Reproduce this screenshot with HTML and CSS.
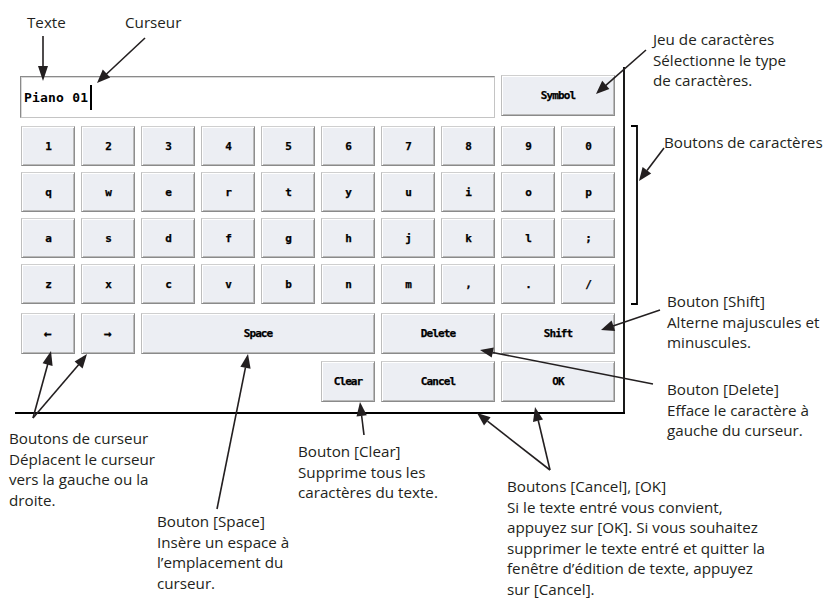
FILE: index.html
```html
<!DOCTYPE html>
<html lang="fr">
<head>
<meta charset="utf-8">
<title>Clavier</title>
<link rel="stylesheet" href="styles.css">
</head>
<body>
<div class="page">
  <div class="kbd">
    <div class="field"><span class="value">Piano 01</span><span class="caret"></span></div>
    <div class="key tall wide2">Symbol</div>

    <div class="key">1</div><div class="key">2</div><div class="key">3</div><div class="key">4</div><div class="key">5</div>
    <div class="key">6</div><div class="key">7</div><div class="key">8</div><div class="key">9</div><div class="key">0</div>

    <div class="key">q</div><div class="key">w</div><div class="key">e</div><div class="key">r</div><div class="key">t</div>
    <div class="key">y</div><div class="key">u</div><div class="key">i</div><div class="key">o</div><div class="key">p</div>

    <div class="key">a</div><div class="key">s</div><div class="key">d</div><div class="key">f</div><div class="key">g</div>
    <div class="key">h</div><div class="key">j</div><div class="key">k</div><div class="key">l</div><div class="key">;</div>

    <div class="key">z</div><div class="key">x</div><div class="key">c</div><div class="key">v</div><div class="key">b</div>
    <div class="key">n</div><div class="key">m</div><div class="key">,</div><div class="key">.</div><div class="key">/</div>

    <div class="key tall arrow">←</div>
    <div class="key tall arrow">→</div>
    <div class="key tall wide4">Space</div>
    <div class="key tall wide2">Delete</div>
    <div class="key tall wide2">Shift</div>

    <div class="key tall col6">Clear</div>
    <div class="key tall wide2">Cancel</div>
    <div class="key tall wide2">OK</div>
  </div>

  <svg class="overlay" width="824" height="602" viewBox="0 0 824 602">
    <g class="frame">
      <line x1="624" y1="67" x2="624" y2="413"/>
      <line x1="15" y1="413" x2="625" y2="413"/>
      <polyline points="631,126 637,126 637,304 631,304"/>
    </g>
    <g class="arrows">
      <line x1="43" y1="36" x2="43" y2="68"/>
      <polygon points="43,81 38,66 48,66"/>

      <line x1="145" y1="38" x2="106" y2="74.5"/>
      <polygon points="97,83 102.8,69.6 110.2,77.4"/>

      <line x1="646" y1="50" x2="605.5" y2="85.6"/>
      <polygon points="596,94 602.2,80.8 609.4,89"/>

      <line x1="664" y1="148" x2="647" y2="170.4"/>
      <polygon points="639,181 642.6,167 651.2,173.6"/>

      <line x1="660" y1="310" x2="613" y2="326"/>
      <polygon points="601,330 611.6,320.6 615.1,331"/>

      <line x1="653" y1="384" x2="492.5" y2="352.5"/>
      <polygon points="480,350 493.8,347.4 491.7,357.6"/>

      <line x1="33" y1="418" x2="47.8" y2="364"/>
      <polygon points="51,351 52.6,365.9 42.6,363.2"/>
      <line x1="33" y1="418" x2="78.8" y2="364.6"/>
      <polygon points="87,354 82.6,368.4 74.6,361.6"/>

      <line x1="217" y1="509" x2="245.5" y2="367.3"/>
      <polygon points="248,354 250.6,368.8 240.4,366.8"/>

      <line x1="364" y1="435" x2="361.6" y2="415.5"/>
      <polygon points="360,402 366.8,415.3 356.5,416.6"/>

      <line x1="550" y1="470" x2="487.5" y2="421.2"/>
      <polygon points="477,413 490.6,417.3 484,425.6"/>
      <line x1="550" y1="470" x2="538.2" y2="420.3"/>
      <polygon points="535,407 543,419.6 533,422"/>
    </g>
  </svg>

  <div class="note n-texte">Texte</div>
  <div class="note n-curseur">Curseur</div>
  <div class="note n-jeu">Jeu de caractères<br>Sélectionne le type<br>de caractères.</div>
  <div class="note n-boutons">Boutons de caractères</div>
  <div class="note n-shift">Bouton [Shift]<br>Alterne majuscules et<br>minuscules.</div>
  <div class="note n-delete">Bouton [Delete]<br>Efface le caractère à<br>gauche du curseur.</div>
  <div class="note n-cursor">Boutons de curseur<br>Déplacent le curseur<br>vers la gauche ou la<br>droite.</div>
  <div class="note n-clear">Bouton [Clear]<br>Supprime tous les<br>caractères du texte.</div>
  <div class="note n-space">Bouton [Space]<br>Insère un espace à<br>l’emplacement du<br>curseur.</div>
  <div class="note n-ok">Boutons [Cancel], [OK]<br>Si le texte entré vous convient,<br>appuyez sur [OK]. Si vous souhaitez<br>supprimer le texte entré et quitter la<br>fenêtre d’édition de texte, appuyez<br>sur [Cancel].</div>
</div>
</body>
</html>
```

FILE: styles.css
```css
* { box-sizing: border-box; }

html, body {
  margin: 0;
  padding: 0;
  background: #ffffff;
}

body {
  width: 824px;
  height: 602px;
  overflow: hidden;
  font-family: "Open Sans", "Noto Sans", sans-serif;
  color: #231f20;
}

.page {
  position: relative;
  width: 824px;
  height: 602px;
  padding: 75px 0 0 21px;
}

.kbd {
  display: grid;
  grid-template-columns: repeat(10, 54px);
  grid-template-rows: 45px 40px 40px 40px 43px 42px 41px;
  column-gap: 6px;
  row-gap: 6px;
}

.field {
  grid-column: 1 / 9;
  height: 42px;
  margin-left: -1px;
  margin-top: 1px;
  background: #ffffff;
  border: 1px solid;
  border-color: #8a8a8a #c4c4c4 #c4c4c4 #8a8a8a;
  box-shadow: inset 1px 1px 0 #d8d8d8;
  display: flex;
  align-items: center;
  padding-left: 3px;
}

.value {
  font-family: "DejaVu Sans Mono", "Liberation Mono", monospace;
  font-weight: bold;
  font-size: 13px;
  letter-spacing: 0.2px;
  color: #000;
}

.caret {
  width: 1.5px;
  height: 25px;
  background: #000;
  margin-left: 2px;
}

.key {
  align-self: start;
  height: 40px;
  background: #eceef3;
  border: 1px solid;
  border-color: #cfcfcf #8e8e8e #8a8a8a #bdbdbd;
  box-shadow: inset 1px 1px 0 #ffffff, inset -1px -1px 0 #b9b9b9;
  display: flex;
  align-items: center;
  justify-content: center;
  font-family: "DejaVu Sans Mono", "Liberation Mono", monospace;
  font-weight: bold;
  font-size: 11px;
  letter-spacing: -0.9px;
  -webkit-text-stroke: 0.25px #000;
  color: #000;
}

.key.arrow {
  font-size: 13px;
  letter-spacing: 0;
}

.key.tall { height: 41px; }
.wide2 { grid-column: span 2; }
.wide4 { grid-column: span 4; }
.col6 { grid-column: 6 / 7; }

.overlay {
  position: absolute;
  top: 0;
  left: 0;
  pointer-events: none;
}

.frame line, .frame polyline {
  stroke: #000;
  stroke-width: 1.8;
  fill: none;
}

.arrows line {
  stroke: #231f20;
  stroke-width: 1.6;
}

.arrows polygon {
  fill: #231f20;
}

.note {
  position: absolute;
  font-size: 15.2px;
  line-height: 20.5px;
  white-space: nowrap;
}

.n-texte   { left: 27px;  top: 12px; }
.n-curseur { left: 125px; top: 12px; }
.n-jeu     { left: 653px; top: 29px; }
.n-boutons { left: 664px; top: 132px; }
.n-shift   { left: 667px; top: 291px; }
.n-delete  { left: 667px; top: 379px; }
.n-cursor  { left: 9px;   top: 428px; }
.n-clear   { left: 298px; top: 441px; }
.n-space   { left: 157px; top: 511px; }
.n-ok      { left: 507px; top: 476px; }
```
